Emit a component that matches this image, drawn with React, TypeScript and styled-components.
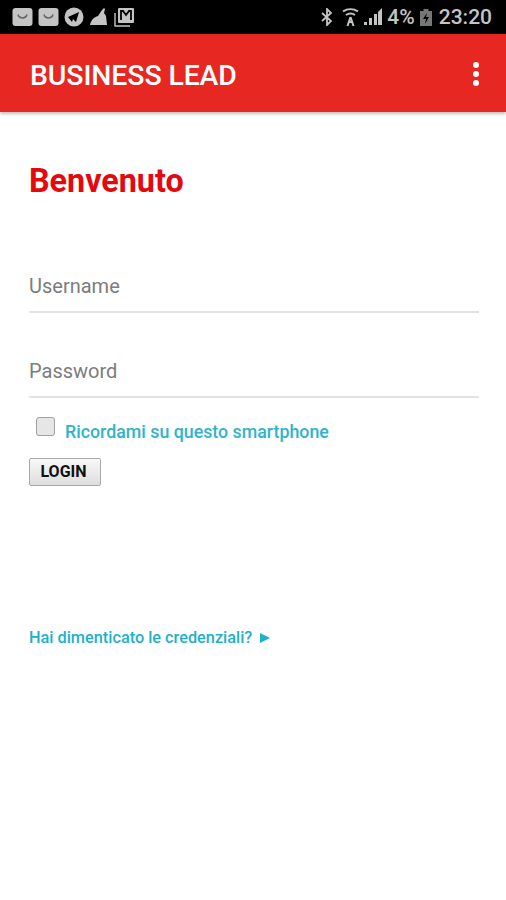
import React from 'react';
import styled, {createGlobalStyle} from "styled-components";

const GlobalStyle = createGlobalStyle`
  html, body {
    margin: 0;
    padding: 0;
    background: #fff;
    font-family: Roboto, "Liberation Sans", sans-serif;
  }
`

const Page = styled.div`
  width: 506px;
  height: 900px;
  overflow: hidden;
  display: flex;
  flex-direction: column;
  background: #fff;
`

const StatusBar = styled.div`
  height: 34px;
  background: #000;
  display: flex;
  align-items: center;
  justify-content: space-between;
  padding: 0 14px 0 12px;
  color: #c4c4c4;
`

const StatusGroup = styled.div<{ $gap: number }>`
  display: flex;
  align-items: center;
  gap: ${p => p.$gap}px;
`

const StatusText = styled.span<{ $size: number }>`
  font-size: ${p => p.$size}px;
  font-weight: 500;
  color: #c4c4c4;
  line-height: 1;
`

const Toolbar = styled.header`
  height: 78px;
  background: #e62722;
  box-shadow: 0 2px 3px rgba(0, 0, 0, 0.25);
  display: flex;
  align-items: center;
  justify-content: space-between;
  padding: 2px 27px 0 30px;
  box-sizing: border-box;
  flex-shrink: 0;
`

const Title = styled.h1`
  margin: 2px 0 0;
  font-size: 28.4px;
  font-weight: 500;
  color: #fff;
  letter-spacing: -0.1px;
`

const MenuDots = styled.div`
  display: flex;
  flex-direction: column;
  gap: 3px;

  span {
    width: 6px;
    height: 6px;
    border-radius: 50%;
    background: #fff;
  }
`

const Content = styled.main`
  padding: 50px 27px 0 29px;
  display: flex;
  flex-direction: column;
`

const Heading = styled.h2`
  margin: 0 0 66px;
  font-size: 32.3px;
  line-height: 38px;
  font-weight: 700;
  color: #e3090f;
`

const Field = styled.div`
  height: 47px;
  border-bottom: 2px solid #e2e2e2;
  margin-bottom: 38px;
  display: flex;
  align-items: center;
  font-size: 20px;
  color: #7c7c7c;
  padding-bottom: 6px;
  box-sizing: border-box;

  &:nth-of-type(2) {
    margin-bottom: 0;
  }
`

const RememberRow = styled.label`
  display: flex;
  align-items: flex-start;
  gap: 10px;
  padding: 19px 0 0 7px;
`

const CheckBox = styled.span`
  width: 19px;
  height: 19px;
  box-sizing: border-box;
  border: 1px solid #a0a0a0;
  border-radius: 3px;
  background: #e6e6e6;
`

const RememberText = styled.span`
  margin: 4px 0 1px;
  font-size: 17.8px;
  line-height: 21px;
  font-weight: 500;
  color: #2fb4cb;
`

const LoginButton = styled.button`
  width: 72px;
  height: 28px;
  margin-top: 15px;
  padding: 0 3px 2px 0;
  border: 1px solid #a8a8a8;
  border-radius: 2px;
  background: linear-gradient(#f8f8f8, #dedede);
  font-family: inherit;
  font-size: 16px;
  font-weight: 700;
  color: #111;
`

const ForgotLink = styled.a`
  margin-top: 142px;
  display: flex;
  align-items: center;
  gap: 8px;
  font-size: 16.3px;
  line-height: 20px;
  font-weight: 500;
  color: #1fb0cb;
`

const BluetoothIcon = styled.svg`
  margin-right: 3px;
`

const BatteryIcon = styled.svg`
  margin-right: 2px;
`

const Smiley = () => (
    <svg width="21" height="20" viewBox="0 0 21 20">
        <rect x="0.500" y="1" width="20" height="18" rx="3" fill="#c4c4c4"/>
        <path d="M6 7.500c1 4.500 8 4.500 9 0" fill="none" stroke="#666" strokeWidth="1.500"/>
    </svg>
);

const Telegram = () => (
    <svg width="20" height="20" viewBox="0 0 20 20">
        <circle cx="10" cy="10" r="9.500" fill="#c4c4c4"/>
        <path d="M4 10l11-5-3 10-3-3-1 3z" fill="#000"/>
    </svg>
);

const Broom = () => (
    <svg width="20" height="20" viewBox="0 0 20 20">
        <path d="M1 18c1-5 4-8 8-9l4-6 2-2 1 1-1 4 2 3 1 9z" fill="#c4c4c4"/>
    </svg>
);

const Gmail = () => (
    <svg width="20" height="20" viewBox="0 0 20 20">
        <path d="M1 6v13h15" fill="none" stroke="#c4c4c4" strokeWidth="1.400"/>
        <rect x="4" y="1" width="16" height="15" rx="1" fill="#c4c4c4"/>
        <path d="M7 13V4h2l3 4 3-4h2v9" fill="none" stroke="#000" strokeWidth="1.800"/>
    </svg>
);

const Bluetooth = () => (
    <BluetoothIcon width="14" height="18" viewBox="0 0 14 18">
        <path d="M2 5l9 8-4 4V1l4 4-9 8" fill="none" stroke="#c4c4c4" strokeWidth="1.800"/>
    </BluetoothIcon>
);

const Wifi = () => (
    <svg width="17" height="20" viewBox="0 0 17 20">
        <path d="M1 4.500c4.500-3 10.500-3 15 0M4 8c3-2 6-2 9 0" fill="none" stroke="#c4c4c4" strokeWidth="2"/>
        <path d="M8.500 10l-3 9M8.500 10l3 9M6.500 15h4" fill="none" stroke="#c4c4c4" strokeWidth="2"/>
    </svg>
);

const Signal = () => (
    <svg width="18" height="20" viewBox="0 0 18 20">
        <path d="M0 18h3v-3H0zM5 18h3v-7H5zM10 18h3V7h-3z" fill="#c4c4c4"/>
        <path d="M14 18h4V1l-4 4z" fill="#c4c4c4"/>
    </svg>
);

const Battery = () => (
    <BatteryIcon width="12" height="19" viewBox="0 0 12 19">
        <path d="M0 3h3.500V1h5v2H12v15H0z" fill="#777"/>
        <path d="M7 5L3 11h3l-1 5 4-7H6z" fill="#000"/>
    </BatteryIcon>
);

const Triangle = () => (
    <svg width="10" height="10" viewBox="0 0 10 10">
        <path d="M0 0l10 5-10 5z" fill="#1fb0cb"/>
    </svg>
);

export default function App() {
    return (
        <>
            <GlobalStyle/>
            <Page>
                <StatusBar>
                    <StatusGroup $gap={5}>
                        <Smiley/>
                        <Smiley/>
                        <Telegram/>
                        <Broom/>
                        <Gmail/>
                    </StatusGroup>
                    <StatusGroup $gap={5}>
                        <Bluetooth/>
                        <Wifi/>
                        <Signal/>
                        <StatusText $size={21}>4%</StatusText>
                        <Battery/>
                        <StatusText $size={21}>23:20</StatusText>
                    </StatusGroup>
                </StatusBar>
                <Toolbar>
                    <Title>BUSINESS LEAD</Title>
                    <MenuDots><span/><span/><span/></MenuDots>
                </Toolbar>
                <Content>
                    <Heading>Benvenuto</Heading>
                    <Field>Username</Field>
                    <Field>Password</Field>
                    <RememberRow>
                        <CheckBox/>
                        <RememberText>Ricordami su questo smartphone</RememberText>
                    </RememberRow>
                    <LoginButton>LOGIN</LoginButton>
                    <ForgotLink>Hai dimenticato le credenziali? <Triangle/></ForgotLink>
                </Content>
            </Page>
        </>
    );
}
